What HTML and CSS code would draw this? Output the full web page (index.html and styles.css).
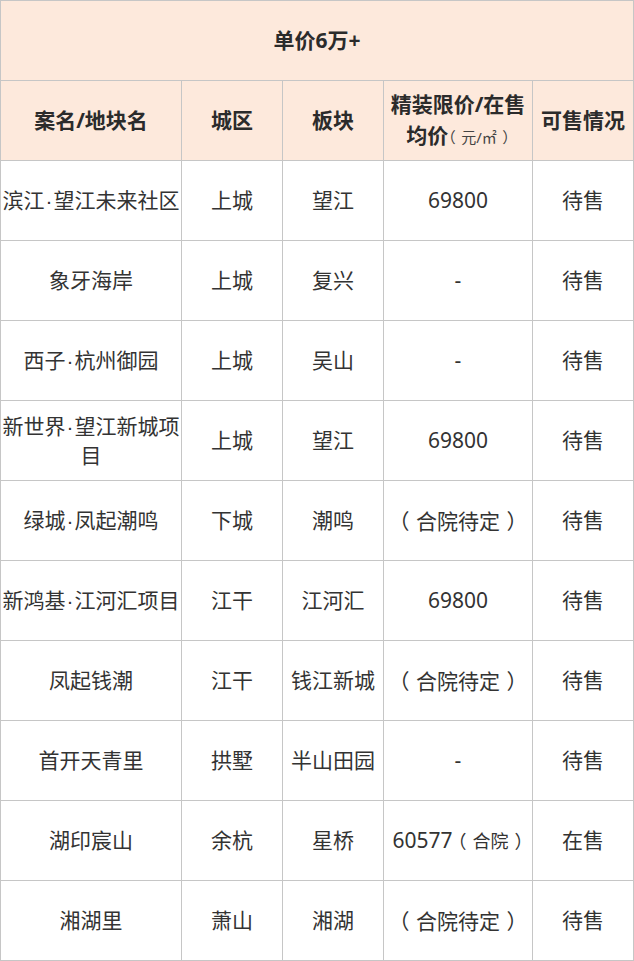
FILE: index.html
```html
<!DOCTYPE html>
<html lang="zh">
<head>
<meta charset="utf-8">
<link rel="stylesheet" href="styles.css">
</head>
<body>
<table class="tbl">
  <colgroup>
    <col class="c1"><col class="c2"><col class="c3"><col class="c4"><col class="c5">
  </colgroup>
  <thead>
    <tr class="title"><th colspan="5">单价6万+</th></tr>
    <tr class="head">
      <th>案名/地块名</th>
      <th>城区</th>
      <th>板块</th>
      <th>精装限价/在售<br>均价<span class="unit"><span class="po">（</span>元/㎡<span class="pc">）</span></span></th>
      <th>可售情况</th>
    </tr>
  </thead>
  <tbody>
    <tr><td>滨江<span class="dot">·</span>望江未来社区</td><td>上城</td><td>望江</td><td>69800</td><td>待售</td></tr>
    <tr><td>象牙海岸</td><td>上城</td><td>复兴</td><td>-</td><td>待售</td></tr>
    <tr><td>西子<span class="dot">·</span>杭州御园</td><td>上城</td><td>吴山</td><td>-</td><td>待售</td></tr>
    <tr><td>新世界<span class="dot">·</span>望江新城项目</td><td>上城</td><td>望江</td><td>69800</td><td>待售</td></tr>
    <tr><td>绿城<span class="dot">·</span>凤起潮鸣</td><td>下城</td><td>潮鸣</td><td><span class="po">（</span>合院待定<span class="pc">）</span></td><td>待售</td></tr>
    <tr><td>新鸿基<span class="dot">·</span>江河汇项目</td><td>江干</td><td>江河汇</td><td>69800</td><td>待售</td></tr>
    <tr><td>凤起钱潮</td><td>江干</td><td>钱江新城</td><td><span class="po">（</span>合院待定<span class="pc">）</span></td><td>待售</td></tr>
    <tr><td>首开天青里</td><td>拱墅</td><td>半山田园</td><td>-</td><td>待售</td></tr>
    <tr><td>湖印宸山</td><td>余杭</td><td>星桥</td><td>60577<span class="note"><span class="po">（</span>合院<span class="pc">）</span></span></td><td>在售</td></tr>
    <tr><td>湘湖里</td><td>萧山</td><td>湘湖</td><td><span class="po">（</span>合院待定<span class="pc">）</span></td><td>待售</td></tr>
  </tbody>
</table>
</body>
</html>
```

FILE: styles.css
```css
html, body {
  margin: 0;
  padding: 0;
  background: #ffffff;
}
.tbl {
  border-collapse: collapse;
  table-layout: fixed;
  width: 633px;
  font-family: "Noto Sans", "Noto Sans CJK SC", sans-serif;
  font-size: 21px;
  color: #333333;
  text-spacing-trim: space-all;
}
.c1 { width: 181px; }
.c2 { width: 101px; }
.c3 { width: 101px; }
.c4 { width: 149px; }
.c5 { width: 101px; }
.tbl th, .tbl td {
  border: 1px solid #c6c6c6;
  height: 79px;
  padding: 0;
  text-align: center;
  vertical-align: middle;
  line-height: 29px;
}
.tbl th {
  background: #fde9dc;
  font-weight: bold;
  font-size: 21px;
  color: #2b2b2b;
  line-height: 31px;
}
.tbl td {
  font-weight: normal;
}
.dot {
  font-family: "Liberation Sans", sans-serif;
  margin: 0 1px;
}
.po, .pc {
  display: inline-block;
  font-family: "Noto Sans CJK SC", sans-serif;
  font-feature-settings: "halt" 1;
  width: 17px;
}
.po { text-align: left; }
.pc { text-align: right; }
.unit {
  font-weight: normal;
  font-size: 15px;
  color: #444;
}
.unit .po, .unit .pc {
  width: 13px;
}
.note {
  font-size: 18px;
  margin-left: 5px;
}
.note .po, .note .pc {
  width: 15px;
}
```
